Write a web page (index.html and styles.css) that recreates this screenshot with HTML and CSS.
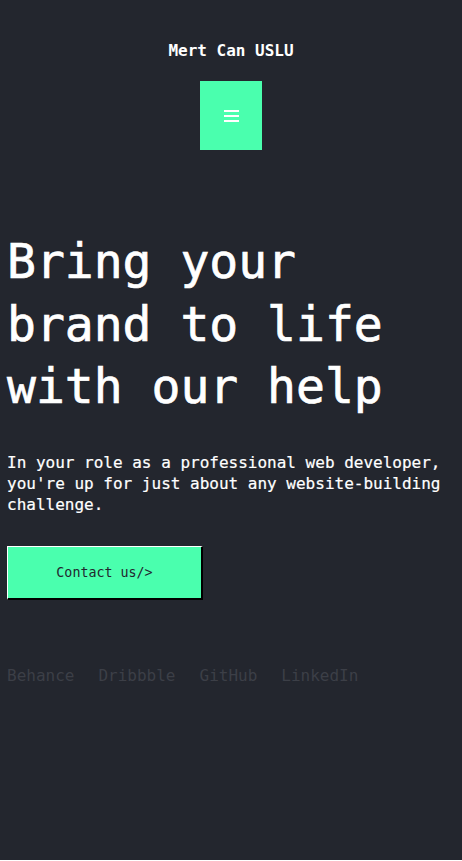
FILE: index.html
```html
<!DOCTYPE html>
<html lang="en">
<head>
<meta charset="utf-8">
<title>Mert Can USLU</title>
<link rel="stylesheet" href="styles.css">
</head>
<body>
<div class="page">
  <header class="header">
    <div class="brand">Mert Can USLU</div>
    <button class="menu-btn" aria-label="Menu">
      <svg class="menu-icon" width="15" height="12" viewBox="0 0 15 12">
        <rect x="0" y="0" width="15" height="2" fill="#fff"/>
        <rect x="0" y="5" width="15" height="2" fill="#fff"/>
        <rect x="0" y="10" width="15" height="2" fill="#fff"/>
      </svg>
    </button>
  </header>
  <main class="hero">
    <h1 class="hero-title">Bring your brand to life with our help</h1>
    <p class="hero-text">In your role as a professional web developer, you're up for just about any website-building challenge.</p>
    <button class="cta">Contact us/&gt;</button>
    <nav class="socials">
      <a href="#">Behance</a>
      <a href="#">Dribbble</a>
      <a href="#">GitHub</a>
      <a href="#">LinkedIn</a>
    </nav>
  </main>
</div>
</body>
</html>
```
FILE: styles.css
```css
html, body {
  margin: 0;
  padding: 0;
  background: #ffffff;
}
body {
  font-family: "DejaVu Sans Mono", "Liberation Mono", monospace;
  color: #ffffff;
}
.page {
  background: #23262e;
  height: 860px;
  padding: 0 7px;
  box-sizing: border-box;
  overflow: hidden;
}
.header {
  display: flex;
  flex-direction: column;
  align-items: center;
  padding-top: 41px;
}
.brand {
  font-size: 16px;
  font-weight: bold;
  line-height: 20px;
}
.menu-btn {
  margin-top: 20px;
  width: 62px;
  height: 69px;
  background: #4affae;
  border: none;
  padding: 0;
  display: flex;
  align-items: center;
  justify-content: center;
}
.menu-icon {
  display: block;
}
.hero {
  padding-top: 80px;
}
.hero-title {
  margin: 0;
  font-size: 48px;
  font-weight: normal;
  -webkit-text-stroke: 0.7px #ffffff;
  line-height: 62.5px;
  letter-spacing: 0;
}
.hero-text {
  margin: 34px 0 0;
  font-size: 16px;
  line-height: 21px;
  -webkit-text-stroke: 0.2px #ffffff;
}
.cta {
  margin-top: 31px;
  width: 196px;
  height: 54px;
  background: #4affae;
  color: #23262e;
  font-family: "DejaVu Sans Mono", "Liberation Mono", monospace;
  font-size: 13.33px;
  border-style: solid;
  border-color: #ffffff #000000 #000000 #ffffff;
  border-width: 1px 2px 2px 1px;
  padding: 0;
  display: block;
}
.socials {
  margin-top: 66px;
  display: flex;
  gap: 24px;
}
.socials a {
  color: #3c3f47;
  text-decoration: none;
  font-size: 16px;
  line-height: 20px;
}
```
